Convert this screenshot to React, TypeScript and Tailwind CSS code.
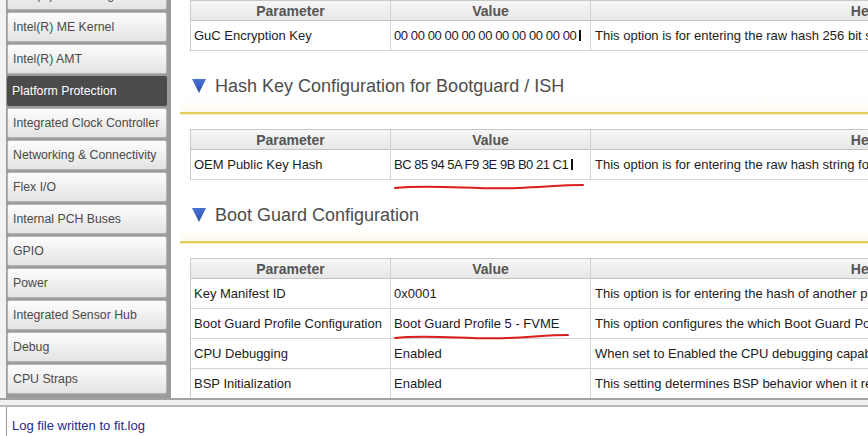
import React from 'react';

const navItems = [
    'Intel(R) ME Configuration',
    'Intel(R) ME Kernel',
    'Intel(R) AMT',
    'Platform Protection',
    'Integrated Clock Controller',
    'Networking & Connectivity',
    'Flex I/O',
    'Internal PCH Buses',
    'GPIO',
    'Power',
    'Integrated Sensor Hub',
    'Debug',
    'CPU Straps',
];

type Row = {
    param: string;
    value: React.ReactNode;
    help: string;
    underline?: { width: number; top: string };
};

function Cursor() {
    return <span className="inline-block w-[2px] h-[11px] bg-[#111] ml-[3px] align-[-1px]" />;
}

function Squiggle({ width, top }: { width: number; top: string }) {
    return (
        <svg
            className={`absolute left-[2px] ${top}`}
            width={width}
            height="10"
            viewBox={`0 0 ${width} 10`}
        >
            <path
                d={`M2 6 C ${width * 0.2} 2, ${width * 0.45} 8, ${width * 0.65} 6 S ${width * 0.9} 3, ${width - 2} 3`}
                fill="none"
                stroke="#d91c1c"
                strokeWidth="2"
                strokeLinecap="round"
            />
        </svg>
    );
}

function ParamTable({ rows }: { rows: Row[] }) {
    return (
        <div className="ml-[19px] w-[950px] border-l border-t border-[#c9c9c9] text-[13px] text-[#1c1c1c]">
            <div className="grid grid-cols-[200px_200px_550px] h-[20px] bg-gradient-to-b from-[#f7f7f7] to-[#e7e7e7] border-b border-[#c4c4c4] text-[14px] font-bold text-[#555]">
                <div className="flex items-center justify-center border-r border-[#d2d2d2]">Parameter</div>
                <div className="flex items-center justify-center border-r border-[#d2d2d2]">Value</div>
                <div className="flex items-center justify-center">Help</div>
            </div>
            {rows.map((r) => (
                <div
                    key={r.param}
                    className="grid grid-cols-[200px_200px_550px] h-[30px] border-b border-[#d4d4d4]"
                >
                    <div className="flex items-center px-[3px] border-r border-[#d4d4d4] whitespace-nowrap overflow-hidden">
                        {r.param}
                    </div>
                    <div className="relative flex items-center px-[3px] border-r border-[#d4d4d4] whitespace-nowrap">
                        {r.value}
                        {r.underline ? <Squiggle width={r.underline.width} top={r.underline.top} /> : null}
                    </div>
                    <div className="flex items-center px-[4px] whitespace-nowrap overflow-hidden">
                        {r.help}
                    </div>
                </div>
            ))}
        </div>
    );
}

function SectionHeading({ title }: { title: string }) {
    return (
        <div className="pt-[23px]">
            <div className="flex items-center h-[24px] ml-[21px] gap-[9px]">
                <svg width="14" height="14" viewBox="0 0 14 14">
                    <defs>
                        <linearGradient id="tri" x1="0" y1="0" x2="0" y2="1">
                            <stop offset="0" stopColor="#4a72d4" />
                            <stop offset="1" stopColor="#2c4fae" />
                        </linearGradient>
                    </defs>
                    <polygon points="0,0 14,0 7,14" fill="url(#tri)" />
                </svg>
                <span className="text-[18px] text-[#4d4d4d] whitespace-nowrap">{title}</span>
            </div>
            <div className="ml-[9px] h-[14px] bg-gradient-to-b from-white to-[#fdfbef]" />
            <div className="ml-[9px] h-[3px] border-t-2 border-[#e2cd58] bg-[#f5eebd]" />
            <div className="h-[14px]" />
        </div>
    );
}

const zeros = '00 00 00 00 00 00 00 00 00 00 00';

export default function App() {
    return (
        <div
            className="w-[868px] h-[436px] overflow-hidden bg-white flex flex-col"
            style={{ fontFamily: '"Liberation Sans", Arial, sans-serif' }}
        >
            <div className="flex h-[398px] shrink-0">
                <div className="w-[6px] bg-[#f3f3f3]" />
                <div className="w-[165px] bg-[#9b9b9b] pl-[1px] pr-[4px] overflow-hidden">
                    <div className="flex flex-col gap-[2px] -mt-[20px]">
                        {navItems.map((item) => {
                            const active = item === 'Platform Protection';
                            return (
                                <div
                                    key={item}
                                    className={
                                        active
                                            ? 'h-[30px] shrink-0 flex items-center pl-[5px] rounded-[2px] bg-[#4b4b4b] text-white text-[12.3px] whitespace-nowrap'
                                            : 'h-[30px] shrink-0 flex items-center pl-[5px] rounded-[2px] border border-[#b5b5b5] bg-gradient-to-b from-[#fdfdfd] to-[#e3e3e3] text-[#4a4a4a] text-[12.3px] whitespace-nowrap'
                                    }
                                >
                                    {item}
                                </div>
                            );
                        })}
                    </div>
                </div>
                <div className="flex-1 overflow-hidden bg-white">
                    <ParamTable
                        rows={[
                            {
                                param: 'GuC Encryption Key',
                                value: (
                                    <span className="tracking-[-0.4px]">
                                        {zeros}
                                        <Cursor />
                                    </span>
                                ),
                                help: 'This option is for entering the raw hash 256 bit string of the GuC encryption key.',
                            },
                        ]}
                    />
                    <SectionHeading title="Hash Key Configuration for Bootguard / ISH" />
                    <ParamTable
                        rows={[
                            {
                                param: 'OEM Public Key Hash',
                                value: (
                                    <span className="tracking-[-0.5px]">
                                        BC 85 94 5A F9 3E 9B B0 21 C1
                                        <Cursor />
                                    </span>
                                ),
                                help: 'This option is for entering the raw hash string for the OEM public key.',
                                underline: { width: 192, top: 'top-[32px]' },
                            },
                        ]}
                    />
                    <SectionHeading title="Boot Guard Configuration" />
                    <ParamTable
                        rows={[
                            {
                                param: 'Key Manifest ID',
                                value: '0x0001',
                                help: 'This option is for entering the hash of another public key manifest.',
                            },
                            {
                                param: 'Boot Guard Profile Configuration',
                                value: 'Boot Guard Profile 5 - FVME',
                                help: 'This option configures the which Boot Guard Policy is used.',
                                underline: { width: 177, top: 'top-[23px]' },
                            },
                            {
                                param: 'CPU Debugging',
                                value: 'Enabled',
                                help: 'When set to Enabled the CPU debugging capabilities are enabled.',
                            },
                            {
                                param: 'BSP Initialization',
                                value: 'Enabled',
                                help: 'This setting determines BSP behavior when it receives the INIT.',
                            },
                        ]}
                    />
                </div>
            </div>
            <div className="h-[9px] shrink-0 border-t-2 border-b-2 border-t-[#a3a3a3] border-b-[#b9b9b9] bg-[#f1f1f1]" />
            <div className="flex-1 ml-[6px] border-l border-[#9a9a9a] pl-[5px] pt-[6px]">
                <span className="text-[13px] text-[#1d2b86]">Log file written to fit.log</span>
            </div>
        </div>
    );
}
